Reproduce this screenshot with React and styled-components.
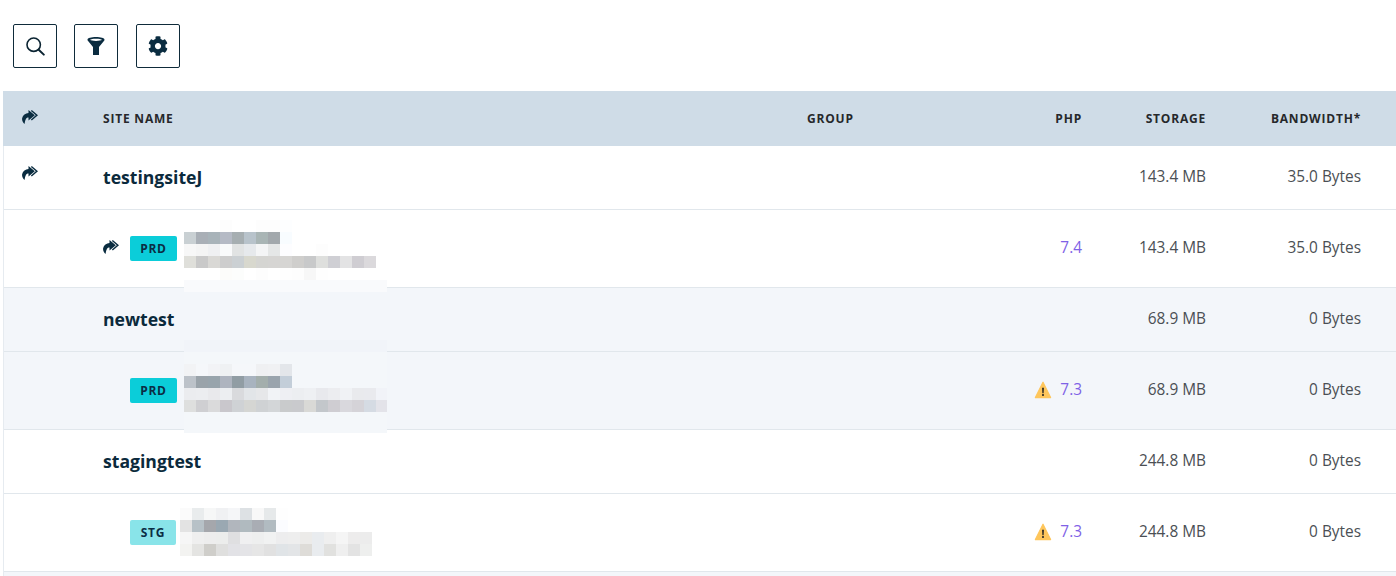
import React from 'react';
import styled, { createGlobalStyle } from 'styled-components';
import { FaCog } from 'react-icons/fa';

const blurPrd1 = {
    left: 184, top: 220, patch: 'transparent', tail: 0,
    rows: [
        ['#fff', '#fff', '#fff', '#fdfdfd', '#fff', '#fff', '#fdfdfd', '#fdfdfd', '#fdfeff'],
        ['#c9d0d3', '#a9afb6', '#a8b3b9', '#b5bac5', '#a6aeb1', '#b8c3cb', '#a9b5b5', '#a2a8ac', '#f8fcff'],
        ['#f7f7f7', '#f4f4f4', '#eff0f2', '#f9fafb', '#e1e3e3', '#e6e9ec', '#f4f5f6', '#e5e7e7', '#fdfdff', '#fff', '#fff', '#fdfdfd'],
        ['#dfdfda', '#c9c9c9', '#d9d8d5', '#cdcdcd', '#cbd0d3', '#d8d8ce', '#d5d5d2', '#d6d5d3', '#d6d5d3', '#cfcecc', '#c8c9ca', '#dedfdd', '#cfcfd4', '#e3e3e4', '#cfcdd2', '#dbd9dc'],
        ['#fff', '#fff', '#fff', '#fcfcfa', '#fcfdfc', '#fff', '#fdfdfd', '#fff', '#fefefe', '#fdfdfd', '#f7f7f7', '#fefefe'],
        Array(17).fill('#f9fafc'),
    ],
};

const blurPrd2 = {
    left: 184, top: 340, patch: '#f4f7fa', tail: 21,
    rows: [
        Array(17).fill('#f1f4f9'),
        [],
        ['#f2f3f5', '#f5f7fa', '#f2f3f6', '#eff1f3', '#f5f7fa', '#f5f7fa', '#eff0f2', '#f0f1f3', '#e3e6ea'],
        ['#bcc2c9', '#9aa3aa', '#98a4ac', '#aeb4bf', '#919da4', '#a8b3bf', '#a3aeac', '#9aa4ad', '#c3ced9'],
        ['#ebecef', '#ecedf0', '#e9e9ec', '#eceef1', '#d9dadd', '#e2e5e8', '#e6e7e9', '#f1f3f6', '#eeeff3', '#eceef1', '#eef0f3', '#e8e9ed', '#ecedf0', '#f0f2f5', '#e9eaed', '#e9eaee', '#f1f3f8'],
        ['#dedfde', '#cfcfd2', '#dadadb', '#c9c7cc', '#cfd2d5', '#d5d6d3', '#cfd2d4', '#d3d6d8', '#c9cbcc', '#c9cacd', '#d9d9d6', '#c3c7cb', '#cfcdd2', '#d9d8dd', '#d5d3d8', '#d5dbe3', '#e3e3e9'],
    ],
};

const blurStg = {
    left: 180, top: 508, patch: 'transparent', tail: 0,
    rows: [
        ['#fbfbfb', '#e9eced', '#f6f7f7', '#f0f1f3', '#f5f6f8', '#dde1e4', '#f8f8f8', '#e6e9ea', '#fefefe'],
        ['#e3e3e3', '#b7c1c7', '#a5a7ac', '#9aa8b2', '#b1b6bd', '#b0babf', '#a9adb4', '#b1bbc1', '#fbfcff'],
        ['#f6f6f6', '#efefef', '#ededed', '#ecedec', '#dfdfe1', '#f0f0f1', '#eeefef', '#f1f2f2', '#ededee', '#eeeeee', '#ecebe9', '#e9ecef', '#efefef', '#f5f5f5', '#edecec', '#ececec'],
        ['#f3f3f1', '#e4e4e2', '#cfceca', '#dfdfde', '#e2e2e6', '#e4e4e7', '#e6e6e6', '#e1e1e1', '#e0e4e7', '#e3e5e7', '#dedcd8', '#e9ecef', '#e1e1df', '#efefef', '#e3e3e3', '#eeefee'],
    ],
};

const sites = [
    {
        name: 'testingsiteJ', storage: '143.4 MB', bandwidth: '35.0 Bytes', shared: true,
        env: { badge: 'PRD', php: '7.4', blur: blurPrd1, shared: true },
    },
    {
        name: 'newtest', storage: '68.9 MB', bandwidth: '0 Bytes', shaded: true,
        env: { badge: 'PRD', php: '7.3', warn: true, blur: blurPrd2 },
    },
    {
        name: 'stagingtest', storage: '244.8 MB', bandwidth: '0 Bytes',
        env: { badge: 'STG', php: '7.3', warn: true, blur: blurStg },
    },
];

const SearchIcon = () => (
    <svg width="20" height="20" viewBox="0 0 20 20" fill="none" stroke="#0b2432">
        <circle cx="8.7" cy="8.700" r="6.7" strokeWidth="1.6" />
        <path d="M13.700 13.700l5.100 4.900" strokeWidth="2" strokeLinecap="round" />
    </svg>
);

const FunnelIcon = () => (
    <svg width="18" height="18" viewBox="0 0 18 18">
        <path
            fill="#0a2c40"
            fillRule="evenodd"
            d="M9 0c4.600 0 8.500 1 8.500 2.700 0 .5-.2.9-.6 1.300L12 10v8H6v-8L1.100 4C.7 3.600.5 3.200.5 2.700.5 1 4.400 0 9 0zM9 1.700c-3 0-5.300.4-6 1.100.7.7 3 1.200 6 1.200s5.300-.5 6-1.200c-.7-.7-3-1.100-6-1.100z"
        />
    </svg>
);

const ShareIcon = () => (
    <ShareSvg viewBox="0 0 16 14">
        <path d="M6.500 0l6.300 5.200-6.300 5.300V7.400C4.300 7.400 3.200 9.200 2.600 14 .7 12.300-.3 10.400.2 8.100 .8 5.100 3.500 3.200 6.500 3z" />
        <path d="M9.800 0L16 5.200l-6.200 5.200-.9-.9 4.900-4.300L8.900.9z" />
    </ShareSvg>
);

const WarnIcon = () => (
    <svg width="18" height="18" viewBox="0 0 18 18">
        <path fill="#fec65c" stroke="#fec65c" strokeWidth="1.2" strokeLinejoin="round" d="M9 1.200L1.400 16.600h15.200z" />
        <path fill="#222" d="M8.100 6.800h1.800l-.3 5.400H8.400zM9 13a1.050 1.050 0 1 1 0 2.100A1.050 1.050 0 0 1 9 13z" />
    </svg>
);

const Blur = ({ blur }) => (
    <BlurPatch $left={blur.left} $top={blur.top} $patch={blur.patch} $tail={blur.tail}>
        {blur.rows.map((row, rowIdx) => (
            <BlurRow key={rowIdx}>
                {row.map((color, idx) => <BlurTile key={idx} $color={color} />)}
            </BlurRow>
        ))}
    </BlurPatch>
);

const App = () => (
    <Page>
        <GlobalStyle />
        <Toolbar>
            <ToolButton><SearchIcon /></ToolButton>
            <ToolButton><FunnelIcon /></ToolButton>
            <ToolButton $nudge><FaCog size={20} color="#0a2c40" /></ToolButton>
        </Toolbar>
        <Table>
            <HeadRow>
                <HeadShare><ShareIcon /></HeadShare>
                <HeadCell>Site Name</HeadCell>
                <HeadCell>Group</HeadCell>
                <HeadCell $right>PHP</HeadCell>
                <HeadCell $right>Storage</HeadCell>
                <HeadCell $right>Bandwidth*</HeadCell>
            </HeadRow>
            {sites.map((site) => (
                <React.Fragment key={site.name}>
                    <SiteRow $shaded={site.shaded}>
                        <RowShare>{site.shared && <ShareIcon />}</RowShare>
                        <SiteName>{site.name}</SiteName>
                        <span />
                        <span />
                        <Value>{site.storage}</Value>
                        <Value>{site.bandwidth}</Value>
                    </SiteRow>
                    <EnvRow $shaded={site.shaded}>
                        <span />
                        <EnvCell>
                            <EnvShare>{site.env.shared && <ShareIcon />}</EnvShare>
                            <Badge $staging={site.env.badge === 'STG'}>{site.env.badge}</Badge>
                        </EnvCell>
                        <span />
                        <PhpCell>
                            {site.env.warn && <WarnIcon />}
                            <PhpVersion>{site.env.php}</PhpVersion>
                        </PhpCell>
                        <Value>{site.storage}</Value>
                        <Value>{site.bandwidth}</Value>
                    </EnvRow>
                </React.Fragment>
            ))}
            <Remainder />
        </Table>
        {sites.map((site) => <Blur key={site.name} blur={site.env.blur} />)}
    </Page>
);

const GlobalStyle = createGlobalStyle`
    html, body {
        margin: 0;
        height: 100%;
        overflow: hidden;
        background: #fff;
    }
    body {
        font-family: "Open Sans", "Liberation Sans", sans-serif;
    }
`;

const Page = styled.div`
    position: relative;
    height: 576px;
    overflow: hidden;
    padding-left: 3px;
`;

const Toolbar = styled.div`
    display: flex;
    gap: 17px;
    padding: 24px 0 23px 10px;
`;

const ToolButton = styled.div`
    display: flex;
    align-items: center;
    justify-content: center;
    box-sizing: border-box;
    width: 44px;
    height: 44px;
    border: 1px solid #0f2b3a;
    border-radius: 2px;
    margin-left: ${({ $nudge }) => ($nudge ? '1px' : '0')};
`;

const Table = styled.div`
    border-left: 1px solid #e6ebf0;
`;

const gridRow = `
    display: grid;
    align-items: center;
    box-sizing: border-box;
    padding-right: 35px;
`;

const HeadRow = styled.div`
    ${gridRow}
    grid-template-columns: 100px 704px 100px 175px 124px 155px;
    height: 55px;
    margin-left: -1px;
    background: #cfdce7;
`;

const HeadCell = styled.div`
    font-size: 12px;
    font-weight: 700;
    letter-spacing: 0.8px;
    line-height: 16px;
    text-transform: uppercase;
    color: #26282b;
    text-align: ${({ $right }) => ($right ? 'right' : 'left')};
`;

const ShareSvg = styled.svg`
    display: block;
    width: 16px;
    height: 14px;
    fill: #0a2c40;
`;

const HeadShare = styled.div`
    display: flex;
    padding-left: 19px;
    margin-top: -3px;
`;

const RowShare = styled.div`
    display: flex;
    padding-left: 18px;
    margin-top: -9px;
`;

const SiteRow = styled.div`
    ${gridRow}
    grid-template-columns: 99px 704px 100px 175px 124px 155px;
    height: 64px;
    background: ${({ $shaded }) => ($shaded ? '#f3f6fa' : '#fff')};
    border-bottom: 1px solid #e1e7ec;
`;

const EnvRow = styled(SiteRow)`
    height: 78px;
`;

const SiteName = styled.div`
    font-size: 17.6px;
    font-weight: 700;
    line-height: 22px;
    color: #0b2a3c;
    margin-top: -2px;
`;

const Value = styled.div`
    font-size: 15.4px;
    line-height: 20px;
    text-align: right;
    color: #4b4f54;
    margin-top: -2px;
`;

const EnvCell = styled.div`
    display: flex;
    align-items: center;
`;

const EnvShare = styled.div`
    display: flex;
    width: 27px;
    margin-top: -3px;
`;

const Badge = styled.div`
    display: flex;
    align-items: center;
    justify-content: center;
    width: ${({ $staging }) => ($staging ? '46px' : '47px')};
    height: 25px;
    border-radius: 2px;
    font-size: 12px;
    font-weight: 700;
    letter-spacing: 0.7px;
    color: #0b2d44;
    background: ${({ $staging }) => ($staging ? '#89e4e9' : '#0bcdd9')};
`;

const PhpCell = styled.div`
    display: flex;
    align-items: center;
    justify-content: flex-end;
    gap: 8px;
    margin-top: -1px;
`;

const PhpVersion = styled.span`
    font-size: 15.4px;
    line-height: 20px;
    color: #7f62e6;
`;

const Remainder = styled.div`
    height: 8px;
    background: #f3f6fa;
`;

const BlurPatch = styled.div`
    position: absolute;
    left: ${({ $left }) => $left}px;
    top: ${({ $top }) => $top}px;
    width: 203px;
    overflow: hidden;
    padding-bottom: ${({ $tail }) => $tail}px;
    background: ${({ $patch }) => $patch};
`;

const BlurRow = styled.div`
    display: flex;
    height: 12px;
`;

const BlurTile = styled.div`
    flex: none;
    width: 12px;
    height: 12px;
    background: ${({ $color }) => $color};
`;

export default App;
